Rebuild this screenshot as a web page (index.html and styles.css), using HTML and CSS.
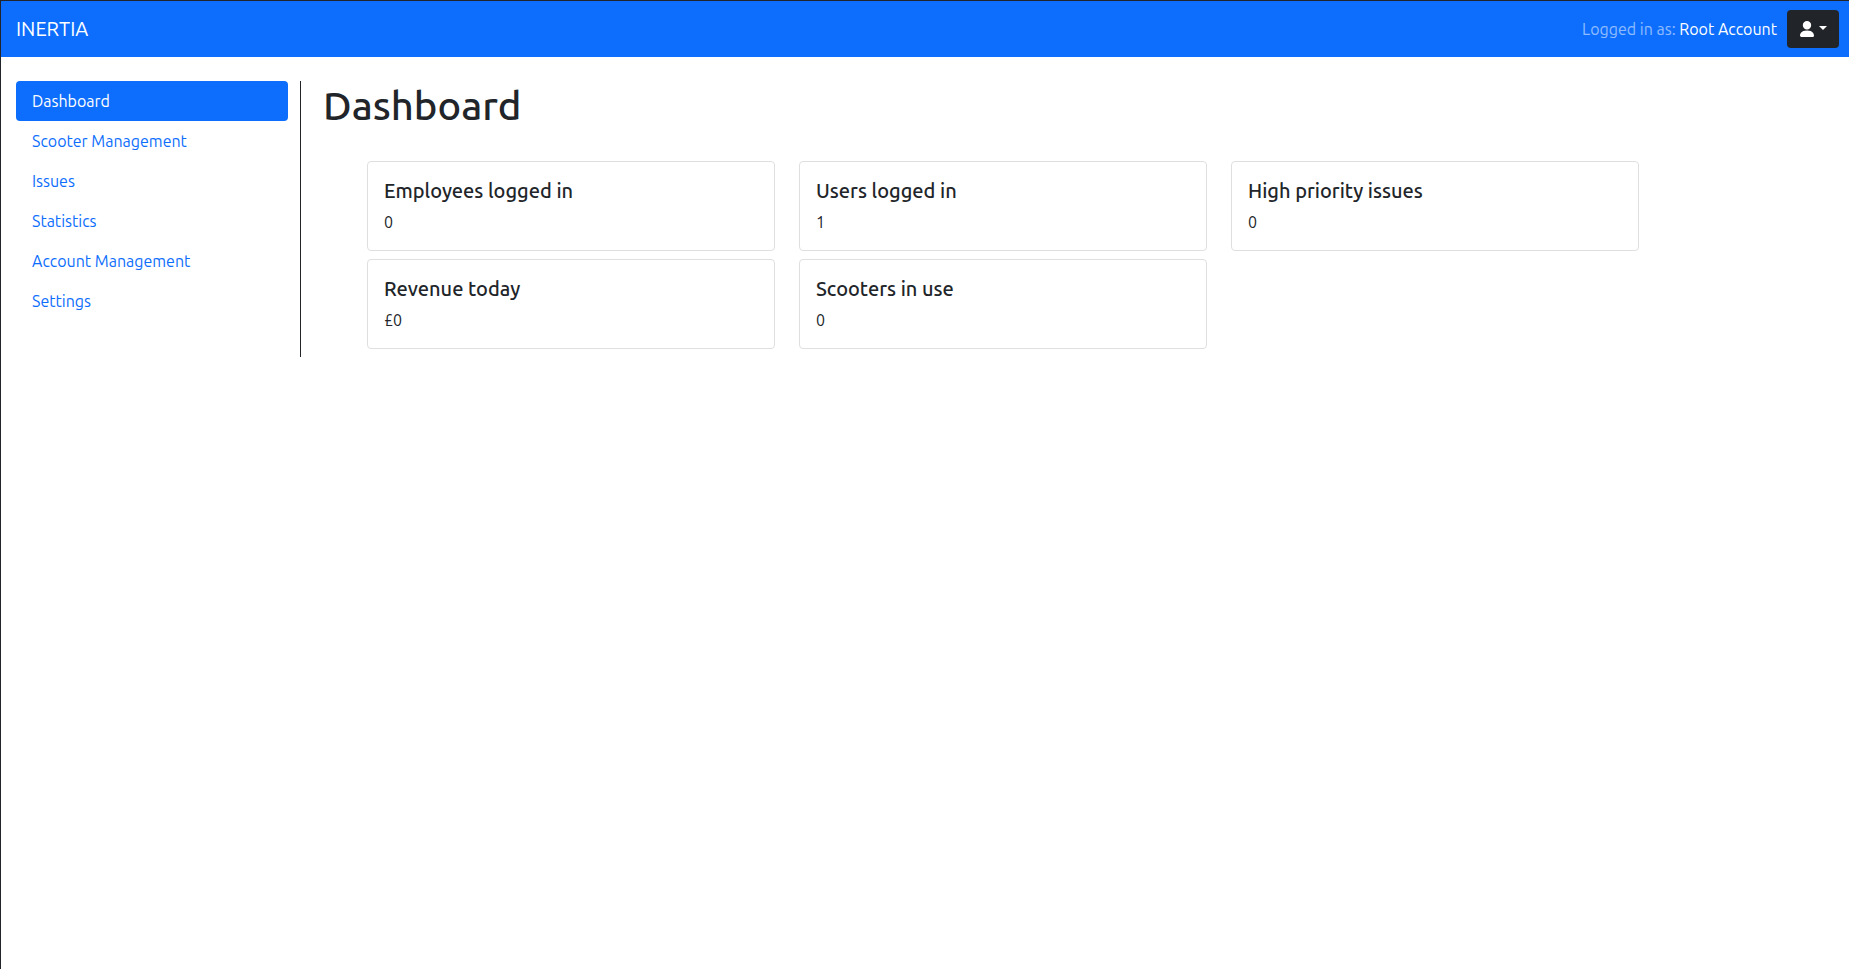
FILE: index.html
```
<!DOCTYPE html>
<html lang="en">
<head>
<meta charset="utf-8">
<meta name="viewport" content="width=device-width, initial-scale=1">
<title>Dashboard</title>
<link rel="stylesheet" href="styles.css">
</head>
<body>
<header class="navbar">
  <a class="brand" href="#">INERTIA</a>
  <div class="account">
    <p class="account-text">Logged in as: <a class="account-name" href="#">Root Account</a></p>
    <button class="account-menu" type="button" aria-label="Account menu">
      <svg class="icon-user" viewBox="0 0 16 16" aria-hidden="true"><path d="M1 14.600c0 .9 1 1.400 1 1.400h12s1 0 1-1.400S14 9.500 8 9.500 1 13 1 14.600zM8 8.500a4.200 4.200 0 1 0 0-8.400 4.200 4.200 0 0 0 0 8.400z"/></svg>
      <span class="caret"></span>
    </button>
  </div>
</header>
<div class="layout">
  <nav class="sidebar">
    <a class="nav-link active" href="#">Dashboard</a>
    <a class="nav-link" href="#">Scooter Management</a>
    <a class="nav-link" href="#">Issues</a>
    <a class="nav-link" href="#">Statistics</a>
    <a class="nav-link" href="#">Account Management</a>
    <a class="nav-link" href="#">Settings</a>
  </nav>
  <main class="content">
    <h1 class="title">Dashboard</h1>
    <div class="cards">
      <section class="card"><h2 class="card-title">Employees logged in</h2><p class="card-text">0</p></section>
      <section class="card"><h2 class="card-title">Users logged in</h2><p class="card-text">1</p></section>
      <section class="card"><h2 class="card-title">High priority issues</h2><p class="card-text">0</p></section>
      <section class="card"><h2 class="card-title">Revenue today</h2><p class="card-text">£0</p></section>
      <section class="card"><h2 class="card-title">Scooters in use</h2><p class="card-text">0</p></section>
    </div>
  </main>
</div>
</body>
</html>
```

FILE: styles.css
```
* { box-sizing: border-box; }

body {
  margin: 0;
  min-height: 100vh;
  border-top: 1px solid #212529;
  border-left: 1px solid #212529;
  background: #fff;
  color: #212529;
  font-family: Ubuntu, "Noto Sans", sans-serif;
  font-size: 16px;
  line-height: 24px;
}

a { text-decoration: none; }
h1, h2, p { margin: 0; }
h1, h2 { font-weight: 500; }

.navbar {
  display: flex;
  align-items: center;
  justify-content: space-between;
  min-height: 56px;
  padding: 8px 10px 8px 15px;
  background: #0d6efd;
}
.brand { color: #fff; font-size: 20px; line-height: 30px; }
.account { display: flex; align-items: center; gap: 10px; }
.account-text { color: rgba(255, 255, 255, 0.55); }
.account-name { color: #fff; }
.account-menu {
  display: flex;
  align-items: center;
  gap: 4px;
  height: 38px;
  padding: 0 12px;
  border: 0;
  border-radius: 4px;
  background: #212529;
  color: #fff;
}
.icon-user { width: 16px; height: 16px; fill: currentColor; }
.caret {
  border-top: 4px solid currentColor;
  border-left: 4px solid transparent;
  border-right: 4px solid transparent;
  margin-bottom: 2px;
}

.layout { display: flex; padding: 24px 0 0 15px; }
.sidebar {
  flex: 0 0 285px;
  padding-right: 12px;
  border-right: 1px solid #212529;
}
.nav-link {
  display: block;
  padding: 8px 16px;
  border-radius: 4px;
  color: #0d6efd;
}
.nav-link.active { background: #0d6efd; color: #fff; }

.content { flex: 1; padding: 0 166px 8px 22px; }
.title { font-size: 40px; line-height: 50px; }
.cards {
  display: grid;
  grid-template-columns: repeat(3, minmax(0, 1fr));
  gap: 8px 24px;
  max-width: 1272px;
  margin: 30px auto 0;
}
.card { padding: 16px; border: 1px solid #dfdfdf; border-radius: 4px; }
.card-title { margin-bottom: 6px; font-size: 20px; line-height: 26px; }
```
